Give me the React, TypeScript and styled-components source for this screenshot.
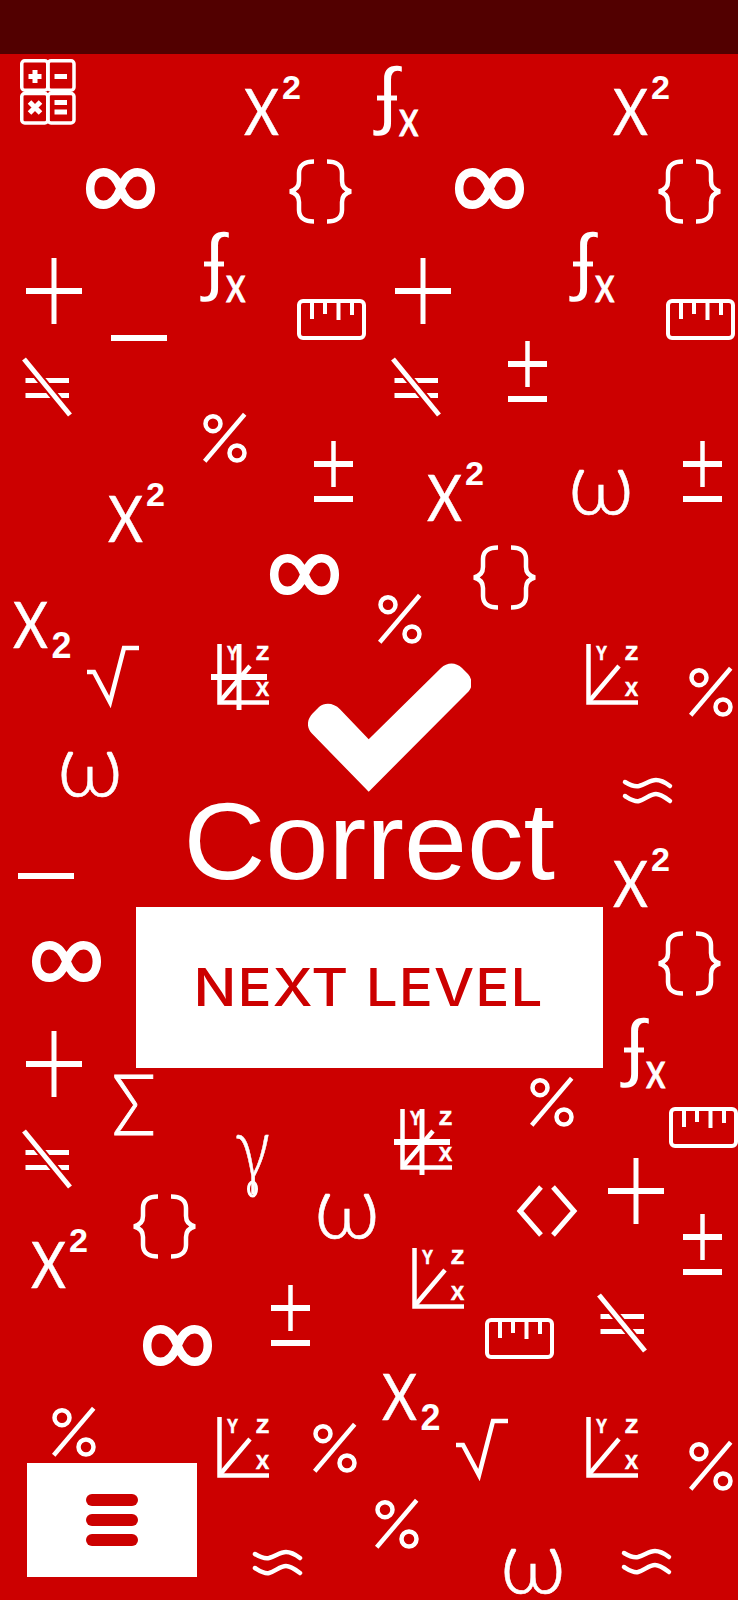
import React from "react";
import styled, { createGlobalStyle } from "styled-components";

const RED = "#cc0000";

const Global = createGlobalStyle`
  html, body { margin: 0; padding: 0; background: ${RED}; }
`;

const Page = styled.div`
  position: relative;
  width: 738px;
  height: 1600px;
  overflow: hidden;
  background: ${RED};
  display: flex;
  flex-direction: column;
  font-family: "Liberation Sans", Arial, sans-serif;
`;

const TopBar = styled.div`
  flex: 0 0 54px;
  background: #520000;
`;

const SymbolLayer = styled.div`
  position: absolute;
  inset: 0;
`;

const SymbolSvg = styled.svg<{ $x: number; $y: number }>`
  position: absolute;
  left: ${(p) => p.$x}px;
  top: ${(p) => p.$y}px;
  overflow: visible;
  stroke: #fff;
  fill: none;
`;

const Main = styled.main`
  position: relative;
  z-index: 1;
  padding-top: 609px;
  display: flex;
  flex-direction: column;
  align-items: center;
`;

const CheckIcon = styled.svg`
  display: block;
  width: 163px;
  height: 129px;
  margin-left: 41px;
  fill: #fff;
`;

const Title = styled.h1`
  margin: -1px 0 3px;
  font-size: 110px;
  line-height: 100px;
  font-weight: 400;
  color: #fff;
  transform: scaleX(1.03);
`;

const NextButton = styled.button`
  margin-top: 13px;
  width: 467px;
  height: 161px;
  border: 0;
  background: #fff;
  color: ${RED};
  font-family: Inter, "Liberation Sans", sans-serif;
  font-weight: 500;
  font-size: 52px;
  letter-spacing: 1px;
  padding: 0;
`;

const NextLabel = styled.span`
  display: inline-block;
  transform: scaleX(1.09);
`;

const Footer = styled.footer`
  position: relative;
  z-index: 1;
  margin-top: auto;
  padding: 0 0 23px 27px;
`;

const MenuButton = styled.button`
  width: 170px;
  height: 114px;
  border: 0;
  padding: 0;
  background: #fff;
  display: flex;
  flex-direction: column;
  align-items: center;
  justify-content: center;
  gap: 8px;
`;

const MenuBar = styled.span`
  display: block;
  width: 52px;
  height: 12px;
  border-radius: 6px;
  background: ${RED};
`;

const Letter = styled.text<{ $font?: string; $weight?: number; $size: number; $thick?: number }>`
  fill: #fff;
  stroke: ${(p) => (p.$thick ? "#fff" : "none")};
  stroke-width: ${(p) => p.$thick || 0}px;
  font-family: ${(p) => p.$font || '"Liberation Sans"'}, sans-serif;
  font-weight: ${(p) => p.$weight || 400};
  font-size: ${(p) => p.$size}px;
`;

const Stroke = styled.g<{ $w: number }>`
  stroke-width: ${(p) => p.$w}px;
`;

const RoundStroke = styled.g<{ $w: number }>`
  stroke-width: ${(p) => p.$w}px;
  stroke-linecap: round;
  stroke-linejoin: round;
`;

const Halo = styled.line`
  stroke: ${RED};
  stroke-width: 9px;
`;

type Def = { w: number; h: number; draw: React.ReactNode };

const plusDraw = (
  <>
    <Stroke $w={6}>
      <line x1={0} y1={33} x2={56} y2={33} />
    </Stroke>
    <Stroke $w={5}>
      <line x1={28} y1={0} x2={28} y2={66} />
    </Stroke>
  </>
);

const axesDraw = (
  <>
    <Stroke $w={4.5}>
      <path d="M2.5 0V58.5H52" />
      <line x1={2.5} y1={58} x2={33} y2={22} />
    </Stroke>
    <Letter $size={20} $weight={700} $thick={0.7} x={10} y={16} textLength={11} lengthAdjust="spacingAndGlyphs">Y</Letter>
    <Letter $size={20} $weight={700} $thick={0.7} x={39} y={16} textLength={13} lengthAdjust="spacingAndGlyphs">Z</Letter>
    <Letter $size={20} $weight={700} $thick={0.7} x={39} y={51.5} textLength={13} lengthAdjust="spacingAndGlyphs">X</Letter>
  </>
);

const defs: Record<string, Def> = {
  calc: {
    w: 56,
    h: 66,
    draw: (
      <>
        <Stroke $w={3.5}>
          <rect x={1.75} y={1.75} width={26} height={29.5} rx={3} />
          <rect x={28} y={1.75} width={26} height={29.5} rx={3} />
          <rect x={1.75} y={34.5} width={26} height={29.5} rx={3} />
          <rect x={28} y={34.5} width={26} height={29.5} rx={3} />
        </Stroke>
        <Stroke $w={5}>
          <path d="M8.5 17.5H21.5M15 11V24" />
          <path d="M34.5 17.5H47" />
          <path d="M9.5 43L20.5 54M20.5 43L9.5 54" />
          <path d="M34.5 43.5H47M34.5 53H47" />
        </Stroke>
      </>
    ),
  },
  x2: {
    w: 56,
    h: 60,
    draw: (
      <>
        <Letter $font="Lato" $size={64} $thick={0.5} x={-1} y={60} textLength={35} lengthAdjust="spacingAndGlyphs">X</Letter>
        <Letter $size={33} $weight={700} x={37} y={24} textLength={19} lengthAdjust="spacingAndGlyphs">2</Letter>
      </>
    ),
  },
  xsub: {
    w: 57,
    h: 56,
    draw: (
      <>
        <Letter $font="Lato" $size={64} $thick={0.5} x={-1} y={46} textLength={35} lengthAdjust="spacingAndGlyphs">X</Letter>
        <Letter $size={36} $weight={700} x={37.5} y={56} textLength={20} lengthAdjust="spacingAndGlyphs">2</Letter>
      </>
    ),
  },
  fx: {
    w: 41,
    h: 71,
    draw: (
      <>
        <Letter $size={74} x={0} y={55} textLength={21} lengthAdjust="spacingAndGlyphs">∫</Letter>
        <Stroke $w={5}>
          <line x1={0} y1={33} x2={20} y2={33} />
        </Stroke>
        <Letter $font="Lato" $size={50} $thick={1} x={22} y={71} textLength={19.5} lengthAdjust="spacingAndGlyphs">x</Letter>
      </>
    ),
  },
  inf: {
    w: 69,
    h: 41,
    draw: (
      <RoundStroke $w={8.5}>
        <path d="M34.5 20.5C31 11.5 26.5 4.2 17.5 4.2C9.5 4.2 4.2 11 4.2 20.5C4.2 30 9.5 36.8 17.5 36.8C26.5 36.8 31 29.5 34.5 20.5C38 11.5 42.5 4.2 51.5 4.2C59.5 4.2 64.8 11 64.8 20.5C64.8 30 59.5 36.8 51.5 36.8C42.5 36.8 38 29.5 34.5 20.5Z" />
      </RoundStroke>
    ),
  },
  braces: {
    w: 65,
    h: 65,
    draw: (
      <Stroke $w={4.5}>
        <path d="M26 2.5C17 2.5 11 6 11 14V22C11 27 8 31 2 32.5C8 34 11 38 11 43V51C11 59 17 62.5 26 62.5" />
        <path d="M39 2.5C48 2.5 54 6 54 14V22C54 27 57 31 63 32.5C57 34 54 38 54 43V51C54 59 48 62.5 39 62.5" />
      </Stroke>
    ),
  },
  plus: { w: 56, h: 66, draw: plusDraw },
  minus: {
    w: 56,
    h: 6,
    draw: (
      <Stroke $w={6}>
        <line x1={0} y1={3} x2={56} y2={3} />
      </Stroke>
    ),
  },
  ruler: {
    w: 69,
    h: 41,
    draw: (
      <Stroke $w={4}>
        <rect x={2} y={2} width={65} height={37} rx={4} />
        <path d="M15 2V20M28 2V15M41.5 2V21M55 2V16" />
      </Stroke>
    ),
  },
  neq: {
    w: 50,
    h: 59,
    draw: (
      <>
        <Stroke $w={5}>
          <line x1={3.5} y1={22.5} x2={47} y2={22.5} />
          <line x1={3.5} y1={37.5} x2={47} y2={37.5} />
        </Stroke>
        <Halo x1={2} y1={1} x2={48} y2={57} />
        <Stroke $w={5}>
          <line x1={2} y1={1} x2={48} y2={57} />
        </Stroke>
      </>
    ),
  },
  pm: {
    w: 39,
    h: 61,
    draw: (
      <>
        <Stroke $w={6}>
          <line x1={0} y1={23} x2={39} y2={23} />
          <line x1={0} y1={58} x2={39} y2={58} />
        </Stroke>
        <Stroke $w={4.5}>
          <line x1={19.5} y1={0} x2={19.5} y2={46} />
        </Stroke>
      </>
    ),
  },
  pct: {
    w: 44,
    h: 50,
    draw: (
      <Stroke $w={4.5}>
        <circle cx={10} cy={10.7} r={7.5} />
        <circle cx={34} cy={40} r={7.5} />
        <line x1={41.7} y1={1.3} x2={1.7} y2={48.3} />
      </Stroke>
    ),
  },
  omega: {
    w: 57,
    h: 47,
    draw: (
      <Letter $font="Lato" $weight={300} $size={88} $thick={0.6} x={-4} y={46} textLength={66} lengthAdjust="spacingAndGlyphs">ω</Letter>
    ),
  },
  sqrt: {
    w: 52,
    h: 60,
    draw: (
      <Stroke $w={4.5}>
        <path d="M0 26H7L23 56L37 2H52" />
      </Stroke>
    ),
  },
  axes: { w: 52, h: 61, draw: axesDraw },
  axesPlus: {
    w: 58,
    h: 66,
    draw: (
      <>
        <g transform="translate(6 0)">{axesDraw}</g>
        {plusDraw}
      </>
    ),
  },
  approx: {
    w: 49,
    h: 26,
    draw: (
      <RoundStroke $w={4.5}>
        <path d="M2 4C7 7 11 9 16 8C23 6 27 2 33 2C38 2 43 5 47 8" />
        <path d="M2 18C7 21 11 24 16 23C23 21 27 16 33 16C38 16 43 20 47 23" />
      </RoundStroke>
    ),
  },
  sigma: {
    w: 43,
    h: 61,
    draw: (
      <Letter $font="Lato" $weight={300} $size={84} $thick={1} x={0} y={61} textLength={44} lengthAdjust="spacingAndGlyphs">Σ</Letter>
    ),
  },
  gamma: {
    w: 35,
    h: 60,
    draw: (
      <>
        <Letter $font="Lato" $weight={300} $size={86} $thick={0.6} x={2} y={42} textLength={35} lengthAdjust="spacingAndGlyphs">γ</Letter>
        <Stroke $w={3}>
          <ellipse cx={19.5} cy={52} rx={4} ry={7} />
        </Stroke>
      </>
    ),
  },
  diamond: {
    w: 60,
    h: 50,
    draw: (
      <Stroke $w={5}>
        <path d="M24 1L3 25L24 49" />
        <path d="M36 1L57 25L36 49" />
      </Stroke>
    ),
  },
};

const placements: [string, number, number][] = [
  ["calc", 20, 59], ["x2", 245, 75], ["fx", 377, 65], ["x2", 614, 75],
  ["inf", 86, 168], ["braces", 288, 159], ["inf", 455, 168], ["braces", 657, 159],
  ["plus", 26, 258], ["fx", 204, 231], ["plus", 395, 258], ["fx", 573, 231],
  ["minus", 111, 335], ["ruler", 297, 299], ["ruler", 666, 299],
  ["neq", 22, 358], ["neq", 391, 358], ["pm", 508, 341],
  ["pct", 203, 413], ["pm", 314, 441], ["pm", 683, 441],
  ["x2", 109, 482], ["x2", 428, 461], ["omega", 572, 468],
  ["inf", 270, 554], ["braces", 472, 545], ["pct", 378, 594],
  ["xsub", 14, 602], ["sqrt", 87, 646], ["axesPlus", 211, 644], ["axes", 586, 644], ["pct", 689, 667],
  ["omega", 61, 750], ["approx", 623, 778], ["minus", 18, 873],
  ["x2", 614, 847], ["inf", 32, 941], ["braces", 657, 931], ["fx", 624, 1017],
  ["plus", 26, 1031], ["sigma", 112, 1074], ["neq", 22, 1130], ["gamma", 233, 1137],
  ["pct", 530, 1077], ["ruler", 669, 1107], ["axesPlus", 394, 1109],
  ["omega", 318, 1192], ["braces", 132, 1194], ["diamond", 517, 1186], ["plus", 608, 1158], ["pm", 683, 1214],
  ["x2", 32, 1228], ["axes", 412, 1248], ["pm", 271, 1285], ["inf", 143, 1325], ["ruler", 485, 1318], ["neq", 597, 1294],
  ["xsub", 383, 1374], ["sqrt", 456, 1419], ["axes", 586, 1417], ["pct", 689, 1441],
  ["pct", 52, 1407], ["axes", 217, 1417], ["pct", 313, 1423], ["pct", 375, 1499],
  ["omega", 504, 1547], ["approx", 622, 1549], ["approx", 253, 1550],
];

export default function App() {
  return (
    <Page>
      <Global />
      <TopBar />
      <SymbolLayer>
        {placements.map(([kind, x, y], i) => {
          const d = defs[kind];
          return (
            <SymbolSvg key={i} $x={x} $y={y} width={d.w} height={d.h} viewBox={`0 0 ${d.w} ${d.h}`}>
              {d.draw}
            </SymbolSvg>
          );
        })}
      </SymbolLayer>
      <Main>
        <CheckIcon viewBox="0 0 163 129">
          <path d="M32 46.3L60.7 76.3L133 5C139 -1 148 -1 154 5L160 11C165 17 165 25 159 30L60.7 128.7L3.7 70.3C-2 64 -1 56 5 50L11 44C17 39 26 40 32 46.3Z" />
        </CheckIcon>
        <Title>Correct</Title>
        <NextButton>
          <NextLabel>NEXT LEVEL</NextLabel>
        </NextButton>
      </Main>
      <Footer>
        <MenuButton aria-label="Menu">
          <MenuBar />
          <MenuBar />
          <MenuBar />
        </MenuButton>
      </Footer>
    </Page>
  );
}
